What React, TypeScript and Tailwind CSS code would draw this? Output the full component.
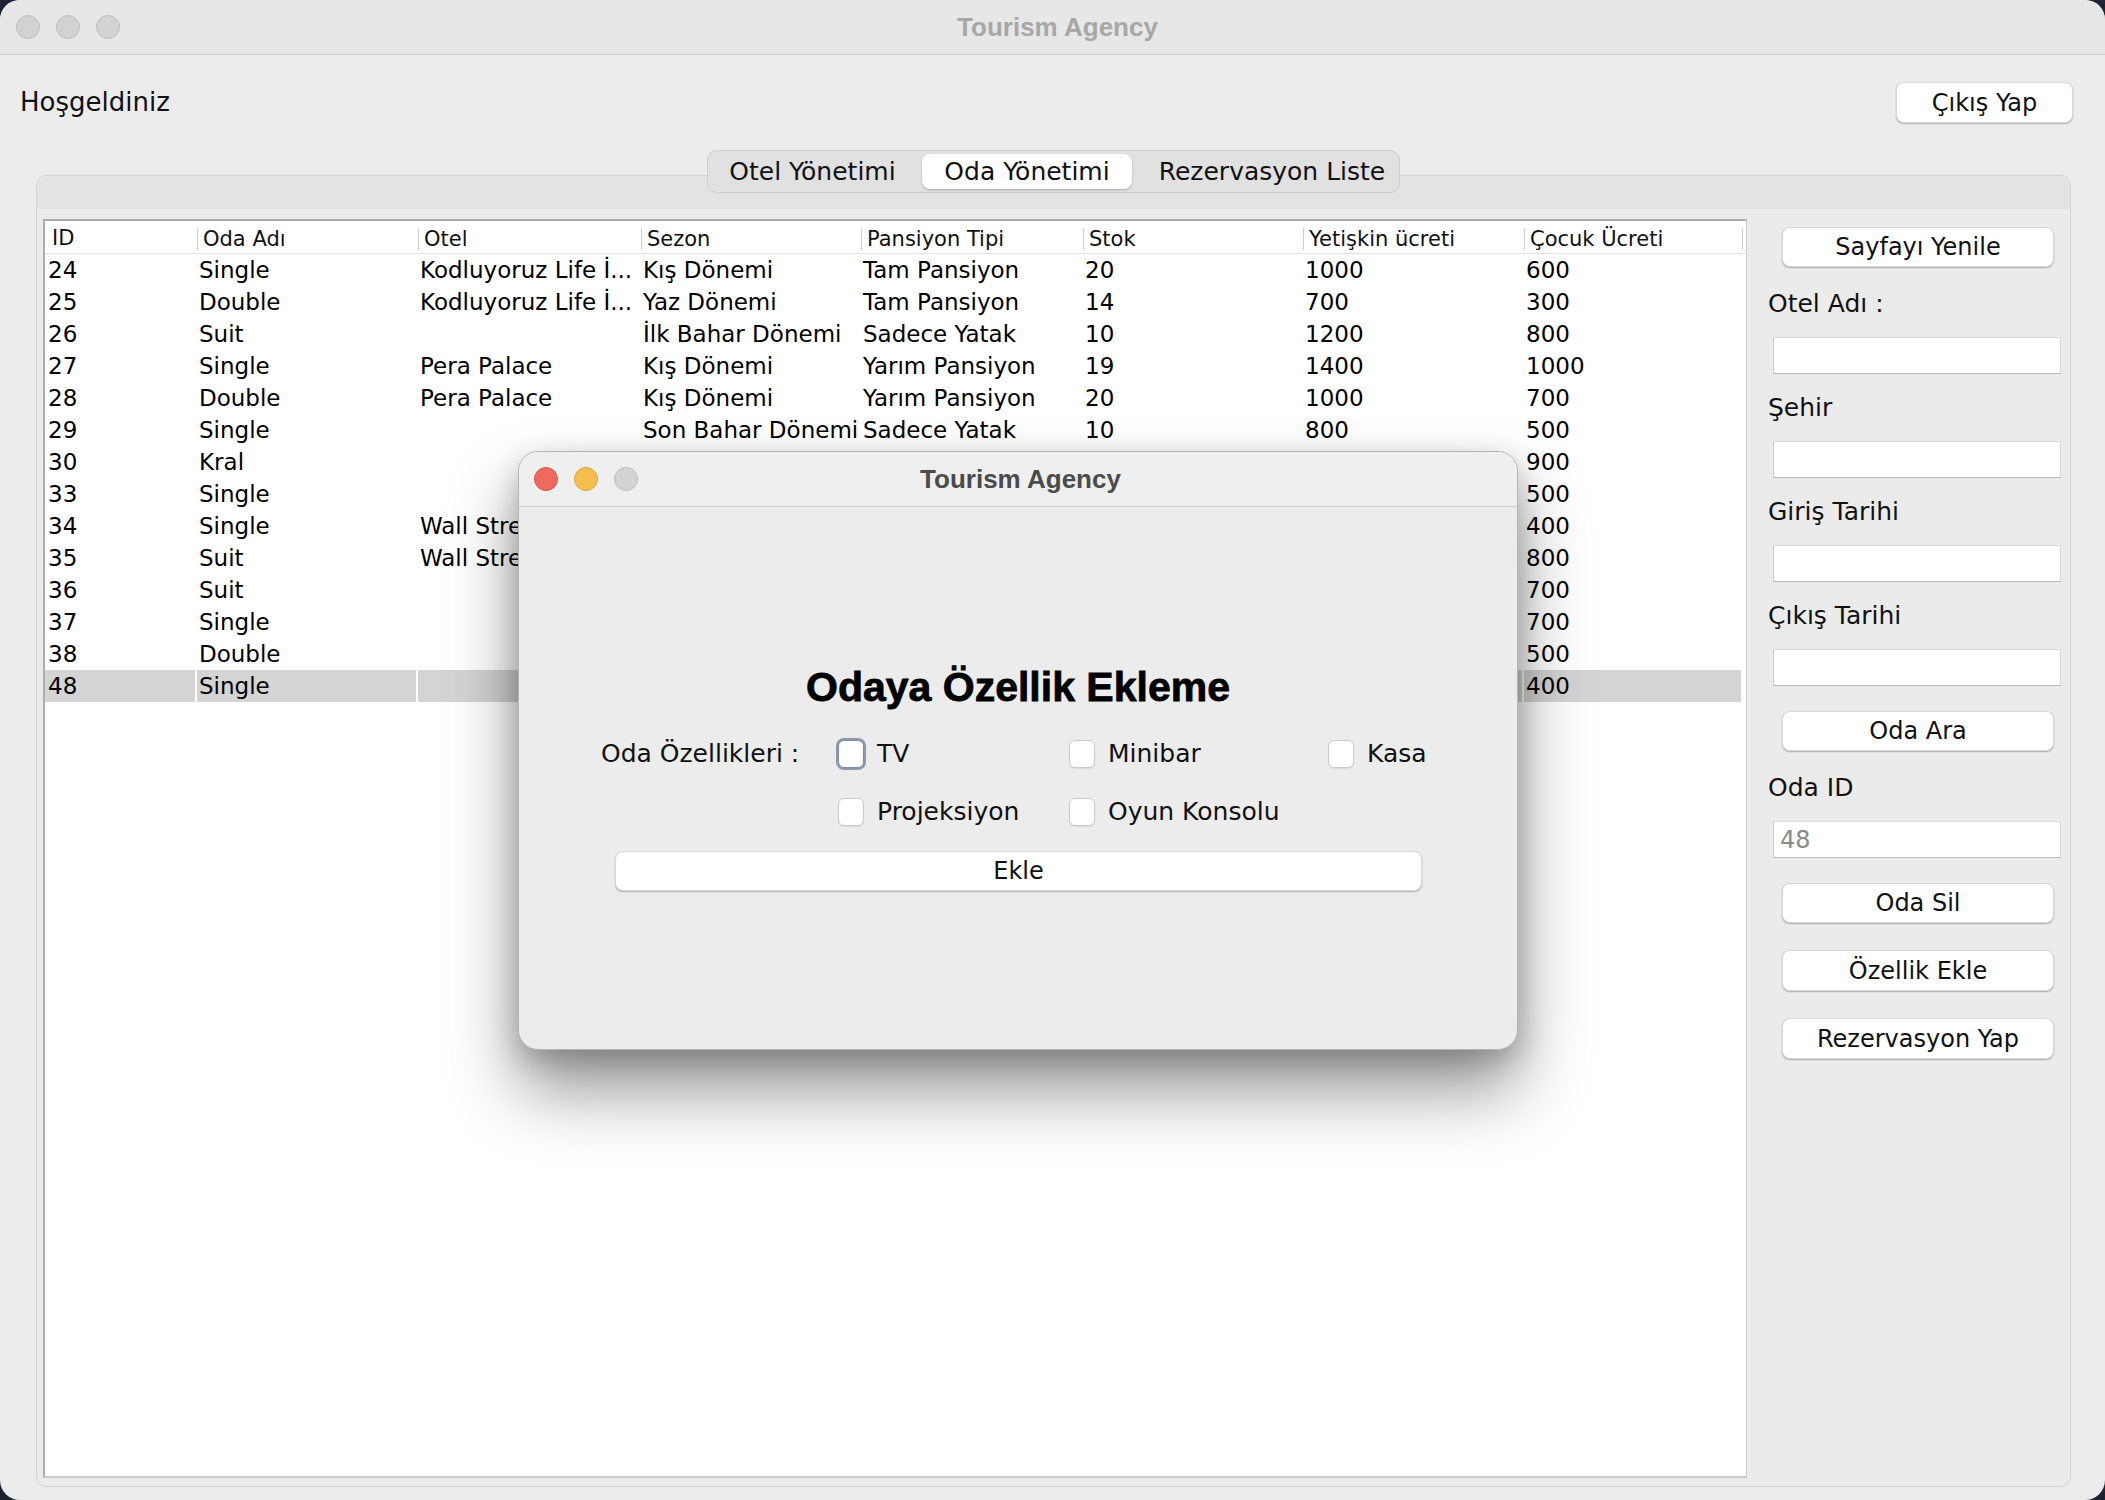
import React from 'react'

// Java Swing (Aqua) görünümlü Tourism Agency ekranı
const COLUMNS = ['ID', 'Oda Adı', 'Otel', 'Sezon', 'Pansiyon Tipi', 'Stok', 'Yetişkin ücreti', 'Çocuk Ücreti']

// dialog arkasında kalan hücreler boş bırakıldı
const ROWS: string[][] = [
  ['24', 'Single', 'Kodluyoruz Life İ...', 'Kış Dönemi', 'Tam Pansiyon', '20', '1000', '600'],
  ['25', 'Double', 'Kodluyoruz Life İ...', 'Yaz Dönemi', 'Tam Pansiyon', '14', '700', '300'],
  ['26', 'Suit', '', 'İlk Bahar Dönemi', 'Sadece Yatak', '10', '1200', '800'],
  ['27', 'Single', 'Pera Palace', 'Kış Dönemi', 'Yarım Pansiyon', '19', '1400', '1000'],
  ['28', 'Double', 'Pera Palace', 'Kış Dönemi', 'Yarım Pansiyon', '20', '1000', '700'],
  ['29', 'Single', '', 'Son Bahar Dönemi', 'Sadece Yatak', '10', '800', '500'],
  ['30', 'Kral', '', '', '', '', '', '900'],
  ['33', 'Single', '', '', '', '', '', '500'],
  ['34', 'Single', 'Wall Street', '', '', '', '', '400'],
  ['35', 'Suit', 'Wall Street', '', '', '', '', '800'],
  ['36', 'Suit', '', '', '', '', '', '700'],
  ['37', 'Single', '', '', '', '', '', '700'],
  ['38', 'Double', '', '', '', '', '', '500'],
  ['48', 'Single', '', '', '', '', '', '400'],
]

const SELECTED = '48'

const GRID = 'grid grid-cols-[152px_221px_223px_220px_222px_220px_221px_219px]'

function Lights({ active }: { active?: boolean }) {
  return (
    <div className="flex items-center gap-[16px]">
      <span className={`w-[24px] h-[24px] rounded-full border ${active ? 'bg-[#ee6a5f] border-[#d4574c]' : 'bg-[#d2d2d2] border-[#bdbdbd]'}`} />
      <span className={`w-[24px] h-[24px] rounded-full border ${active ? 'bg-[#f5bf4f] border-[#d9a33c]' : 'bg-[#d2d2d2] border-[#bdbdbd]'}`} />
      <span className="w-[24px] h-[24px] rounded-full border bg-[#d3d3d3] border-[#bdbdbd]" />
    </div>
  )
}

function AquaButton({ label, className = '' }: { label: string; className?: string }) {
  return (
    <button
      type="button"
      className={`h-[40px] rounded-[8px] bg-white border border-[#d8d8d8] shadow-[0_1px_1.5px_rgba(0,0,0,0.28)] text-[24px] text-[#111] leading-none flex items-center justify-center ${className}`}
    >
      {label}
    </button>
  )
}

function Field({ value, className = '' }: { value?: string; className?: string }) {
  return (
    <div className={`ml-[26px] w-[288px] h-[37px] bg-white border border-[#dadada] border-b-[#b9b9b9] border-l-[#c9c9c9] flex items-center px-[6px] text-[24px] text-[#8a8a8a] ${className}`}>
      {value}
    </div>
  )
}

function Label({ text, className = '' }: { text: string; className?: string }) {
  return <p className={`pl-[21px] h-[34px] leading-[34px] text-[25px] text-[#111] ${className}`}>{text}</p>
}

function Check({ label, focused }: { label: string; focused?: boolean }) {
  return (
    <div className="flex items-center gap-[13px] h-[40px]">
      <span
        className={`w-[26px] h-[28px] rounded-[6px] bg-white border ${
          focused ? 'border-[#7f8da3] shadow-[0_0_0_2px_#8c99ae]' : 'border-[#cacaca] shadow-[0_1px_1px_rgba(0,0,0,0.08)]'
        }`}
      />
      <span className="text-[25px] text-[#111]">{label}</span>
    </div>
  )
}

export default function App() {
  return (
    <div className="relative w-[2105px] h-[1500px] bg-[#1d2333] font-['DejaVu_Sans',sans-serif]">
      <div className="h-full rounded-[20px] overflow-hidden bg-[#ececec] flex flex-col">
        {/* başlık çubuğu */}
        <div className="h-[55px] shrink-0 bg-[#e7e7e8] border-b border-[#d1d1d1] grid grid-cols-[1fr_auto_1fr] items-center pl-[16px]">
          <Lights />
          <span className="font-['Liberation_Sans',Arial,sans-serif] font-bold text-[26px] text-[#a7a7a7] pr-[6px]">Tourism Agency</span>
          <span />
        </div>

        {/* üst satır */}
        <div className="h-[95px] shrink-0 flex items-center justify-between pl-[20px] pr-[32px]">
          <span className="text-[26px] text-[#111]">Hoşgeldiniz</span>
          <AquaButton label="Çıkış Yap" className="w-[177px] h-[41px]" />
        </div>

        {/* sekmeli panel */}
        <div className="flex-1 flex flex-col ml-[36px] mr-[34px] mb-[13px]">
          <div className="relative z-10 self-center h-[43px] rounded-[10px] bg-[#e1e1e1] border border-[#cecece] p-[3px] flex text-[25px] text-[#111]">
            <div className="w-[211px] flex items-center justify-center pr-[8px]">Otel Yönetimi</div>
            <div className="w-[210px] flex items-center justify-center bg-white rounded-[8px] shadow-[0_1px_2px_rgba(0,0,0,0.25)]">Oda Yönetimi</div>
            <div className="w-[264px] flex items-center justify-center pl-[16px]">Rezervasyon Liste</div>
          </div>

          <div className="-mt-[18px] flex-1 flex flex-col rounded-[10px] border border-[#d4d4d4] bg-[#ebebeb] overflow-hidden">
            <div className="h-[33px] shrink-0 bg-[#e3e3e3]" />
            <div className="flex-1 flex pl-[6px] pt-[10px] pb-[8px]">
              {/* tablo */}
              <div className="w-[1704px] bg-white border-t-2 border-l-2 border-[#adadad] border-b-2 border-b-[#c9c9c9] border-r border-r-[#c9c9c9] overflow-hidden">
                <div className={`${GRID} h-[33px] border-b border-[#e2e2e2] text-[21px] text-[#111]`}>
                  {COLUMNS.map((c, i) => (
                    <div key={c} className="flex items-center h-full pt-[2px]">
                      {i === 0 ? (
                        <span className="pl-[7px]">{c}</span>
                      ) : (
                        <span className={`h-[22px] leading-[22px] border-l border-[#cfcfcf] pl-[5px] ${i === COLUMNS.length - 1 ? 'w-full border-r' : ''}`}>{c}</span>
                      )}
                    </div>
                  ))}
                </div>
                {ROWS.map(r => {
                  const sel = r[0] === SELECTED
                  return (
                    <div key={r[0]} className={`${GRID} h-[32px] text-[23px] text-black`}>
                      {r.map((v, i) => (
                        <div
                          key={i}
                          className={`h-full flex items-center whitespace-nowrap overflow-hidden border-r-2 border-white ${i === 0 ? 'pl-[3px]' : 'pl-[2px]'} ${sel ? 'bg-[#d4d4d4]' : ''}`}
                        >
                          {v}
                        </div>
                      ))}
                    </div>
                  )
                })}
              </div>

              {/* sağ form */}
              <div className="flex-1 flex flex-col">
                <AquaButton label="Sayfayı Yenile" className="ml-[35px] w-[272px] mt-[8px]" />
                <Label text="Otel Adı :" className="mt-[20px]" />
                <Field className="mt-[16px]" />
                <Label text="Şehir" className="mt-[17px]" />
                <Field className="mt-[16px]" />
                <Label text="Giriş Tarihi" className="mt-[17px]" />
                <Field className="mt-[16px]" />
                <Label text="Çıkış Tarihi" className="mt-[17px]" />
                <Field className="mt-[16px]" />
                <AquaButton label="Oda Ara" className="ml-[35px] w-[272px] mt-[25px]" />
                <Label text="Oda ID" className="mt-[20px]" />
                <Field value="48" className="mt-[16px]" />
                <AquaButton label="Oda Sil" className="ml-[35px] w-[272px] mt-[25px]" />
                <AquaButton label="Özellik Ekle" className="ml-[35px] w-[272px] h-[41px] mt-[27px]" />
                <AquaButton label="Rezervasyon Yap" className="ml-[35px] w-[272px] h-[41px] mt-[27px]" />
              </div>
            </div>
          </div>
        </div>
      </div>

      {/* özellik ekleme penceresi */}
      <div className="absolute left-[518px] top-[451px] w-[1000px] h-[599px] rounded-[20px] bg-[#ececec] border border-[#b4b4b4] shadow-[0_40px_70px_rgba(0,0,0,0.42),0_10px_28px_rgba(0,0,0,0.2)] overflow-hidden flex flex-col">
        <div className="h-[55px] shrink-0 bg-[#efefef] border-b border-[#cfcfcf] grid grid-cols-[1fr_auto_1fr] items-center pl-[15px]">
          <Lights active />
          <span className="font-['Liberation_Sans',Arial,sans-serif] font-bold text-[26px] text-[#4b4b4b] pr-[10px]">Tourism Agency</span>
          <span />
        </div>
        <div className="flex-1 flex flex-col">
          <h2 className="mt-[157px] text-center h-[46px] leading-[46px] font-['Liberation_Sans',Arial,sans-serif] font-bold text-[41px] text-black [-webkit-text-stroke:0.8px_black]">
            Odaya Özellik Ekleme
          </h2>
          <div className="mt-[24px] pl-[82px] grid grid-cols-[237px_231px_259px_auto] gap-y-[18px]">
            <div className="h-[40px] flex items-center text-[25px] text-[#111]">Oda Özellikleri :</div>
            <Check label="TV" focused />
            <Check label="Minibar" />
            <Check label="Kasa" />
            <div />
            <Check label="Projeksiyon" />
            <Check label="Oyun Konsolu" />
          </div>
          <AquaButton label="Ekle" className="mt-[19px] ml-[96px] w-[807px]" />
        </div>
      </div>
    </div>
  )
}
